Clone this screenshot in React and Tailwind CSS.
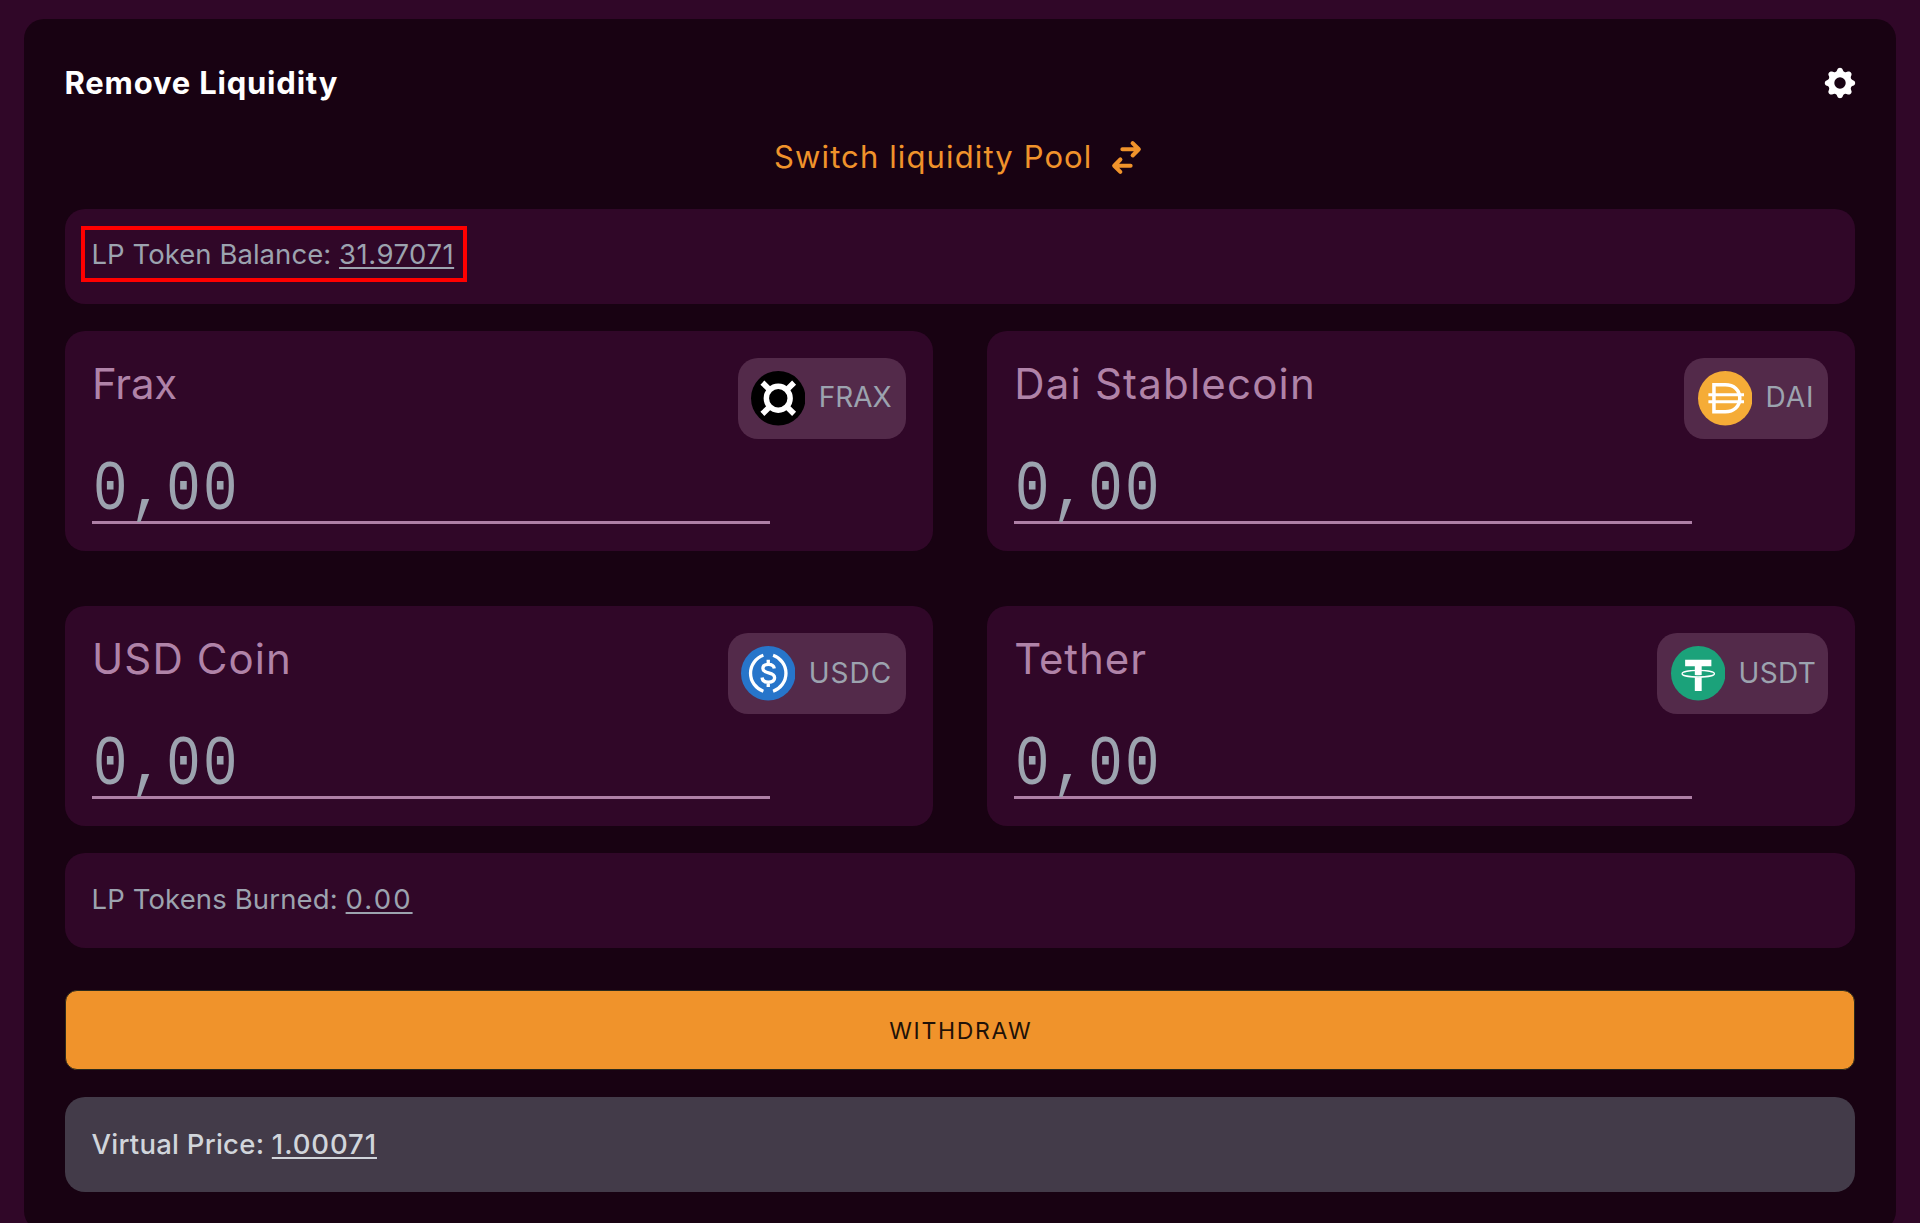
import React from "react";
import { HiCog, HiSwitchHorizontal } from "react-icons/hi";

function FraxIcon() {
  return (
    <svg viewBox="0 0 54 54" className="size-[54.5px]">
      <circle cx="27" cy="27" r="27" fill="#000" />
      <g stroke="#fff" fill="none" strokeWidth="5.4">
        <circle cx="27" cy="27" r="11.8" />
        <path d="M11.3 11.5 19 19M42.7 11.5 35 19M11.3 42.5 19 35M42.7 42.5 35 35" strokeWidth="5.6" />
      </g>
    </svg>
  );
}

function DaiIcon() {
  return (
    <svg viewBox="0 0 54 54" className="size-[54.5px]">
      <circle cx="27" cy="27" r="27" fill="#f5ac37" />
      <g stroke="#fff" fill="none" strokeWidth="3.5">
        <path d="M15.8 13.6H27c8.7 0 14.4 5.4 14.4 13.4S35.7 40.4 27 40.4H15.8z" />
        <path d="M10.3 23.5H45.6M10.3 30.5H45.6" strokeWidth="3.1" />
      </g>
    </svg>
  );
}

function UsdcIcon() {
  return (
    <svg viewBox="0 0 54 54" className="size-[54.5px]">
      <circle cx="27" cy="27" r="27" fill="#2775ca" />
      <g stroke="#fff" fill="none" strokeWidth="3.3">
        <path d="M22.2 9.2A18.8 18.8 0 0 0 22.2 44.8M31.8 9.2A18.8 18.8 0 0 1 31.8 44.8" />
        <path d="M33 22.3c-.5-2.9-2.6-4.1-5.8-4.1-3.5 0-5.5 1.6-5.5 4.1 0 6.2 11.6 2.6 11.6 9.2 0 2.8-2.4 4.4-6.2 4.4-3.7 0-5.9-1.6-6.2-4.7M27 13.6v5M27 35.5v5" />
      </g>
    </svg>
  );
}

function UsdtIcon() {
  return (
    <svg viewBox="0 0 54 54" className="size-[54.5px]">
      <circle cx="27" cy="27" r="27" fill="#1ba27a" />
      <path d="M14 13.5H40V20H30.4V28.8Q27 29.4 23.6 28.8V20H14z" fill="#fff" />
      <path d="M23.6 30.8Q27 31.4 30.4 30.8V44.5H23.6z" fill="#fff" />
      <ellipse cx="27" cy="27.4" rx="16" ry="3.3" fill="none" stroke="#fff" strokeWidth="1.3" />
    </svg>
  );
}

const tokens = [
  { name: "Frax", symbol: "FRAX", Icon: FraxIcon, chip: "w-[168px] pl-[13px]", label: "tracking-[-0.2px]", sym: "tracking-[0px]" },
  { name: "Dai Stablecoin", symbol: "DAI", Icon: DaiIcon, chip: "w-[144px] pl-[13.5px]", label: "tracking-[1.2px]", sym: "tracking-[1px]" },
  { name: "USD Coin", symbol: "USDC", Icon: UsdcIcon, chip: "w-[178px] pl-[13px]", label: "tracking-[1.1px]", sym: "tracking-[1px]" },
  { name: "Tether", symbol: "USDT", Icon: UsdtIcon, chip: "w-[171px] pl-[13.5px]", label: "tracking-[0.9px]", sym: "tracking-[0.4px]" },
];

function TokenCard({ name, symbol, Icon, chip, label, sym }) {
  return (
    <div className="flex h-[220.5px] justify-between rounded-[20px] bg-[#300728] px-[27px] pt-[27px]">
      <div className="flex w-[678px] shrink-0 flex-col">
        <div className={`h-[52px] pl-[0.5px] text-[42px] leading-[52px] whitespace-nowrap text-[#b083a8] ${label}`}>{name}</div>
        <div className="mt-[31px] h-[83px] border-b-[3.5px] border-[#ae7fa6] pt-[10px] pl-[1.5px]">
          <span className="block w-max origin-left scale-x-[0.82] font-['Liberation_Mono',monospace] text-[70px] leading-[79px] tracking-[2.7px] text-[#9ca3af]">
            0,00
          </span>
        </div>
      </div>
      <div className={`-ml-12 flex h-[81.5px] shrink-0 items-center rounded-[20px] bg-[#532a4a] ${chip}`}>
        <Icon />
        <span className={`-mt-[2px] ml-[13.5px] text-[28px] leading-[36px] text-[#9ca3af] ${sym}`}>{symbol}</span>
      </div>
    </div>
  );
}

export default function App() {
  return (
    <div className="h-[1223px] w-[1920px] overflow-hidden bg-[#300728] px-6 pt-[18.5px] font-[Inter,sans-serif]">
      <main className="h-[1212px] rounded-[20px] bg-[#180212] pt-[43px] pr-[41px] pl-[40.5px]">
        <header className="flex h-[42px] items-center justify-between">
          <h1 className="text-[31px] leading-[40px] font-bold tracking-[0.8px] text-white">Remove Liquidity</h1>
          <HiCog className="-mr-[3.5px] size-[38px] text-white" />
        </header>
        <div className="mt-[32px] flex h-[42px] items-center justify-center pl-[2px] text-[#f0932b]">
          <span className="text-[31px] leading-[40px] tracking-[1.12px]">Switch liquidity Pool</span>
          <HiSwitchHorizontal className="mt-[1px] ml-[14px] size-[41px]" />
        </div>

        <section className="mt-[31.5px] h-[94.5px] rounded-[20px] bg-[#300728] pt-[16.5px] pl-[16.5px]">
          <div className="flex h-[56.5px] w-[386px] items-center border-4 border-[#ff0000] pt-[2px] pl-[6.5px] text-[27.5px] whitespace-nowrap text-[#9ca3af]">
            <span className="tracking-[0.05px]">
              LP Token Balance:{" "}
              <span className="tracking-[0.5px] underline decoration-2 underline-offset-[3px]">31.97071</span>
            </span>
          </div>
        </section>

        <section className="mt-[27.2px] grid grid-cols-2 gap-x-[54px] gap-y-[54.6px]">
          {tokens.map((t) => (
            <TokenCard key={t.symbol} {...t} />
          ))}
        </section>

        <section className="mt-[27px] h-[95px] rounded-[20px] bg-[#300728] pt-[26px] pl-[27px] text-[27.5px] leading-[40px] tracking-[0.13px] text-[#9ca3af]">
          LP Tokens Burned:{" "}
          <span className="tracking-[2.1px] underline decoration-2 underline-offset-[3px]">0.00</span>
        </section>

        <button className="mt-[42px] block h-[80px] w-full rounded-[12px] border border-[#2b2a1c] bg-[#f0932b] pt-[1px] pl-[2px] text-[23px] tracking-[1.7px] text-[#1f1208]">
          WITHDRAW
        </button>

        <section className="mt-[27px] h-[95px] rounded-[20px] bg-[#433b49] pt-[26.5px] pl-[27px] text-[27.5px] leading-[40px] font-medium tracking-[0.25px] text-[#d1d5db]">
          Virtual Price:{" "}
          <span className="tracking-[0.9px] underline decoration-2 underline-offset-[3px]">1.00071</span>
        </section>
      </main>
    </div>
  );
}
